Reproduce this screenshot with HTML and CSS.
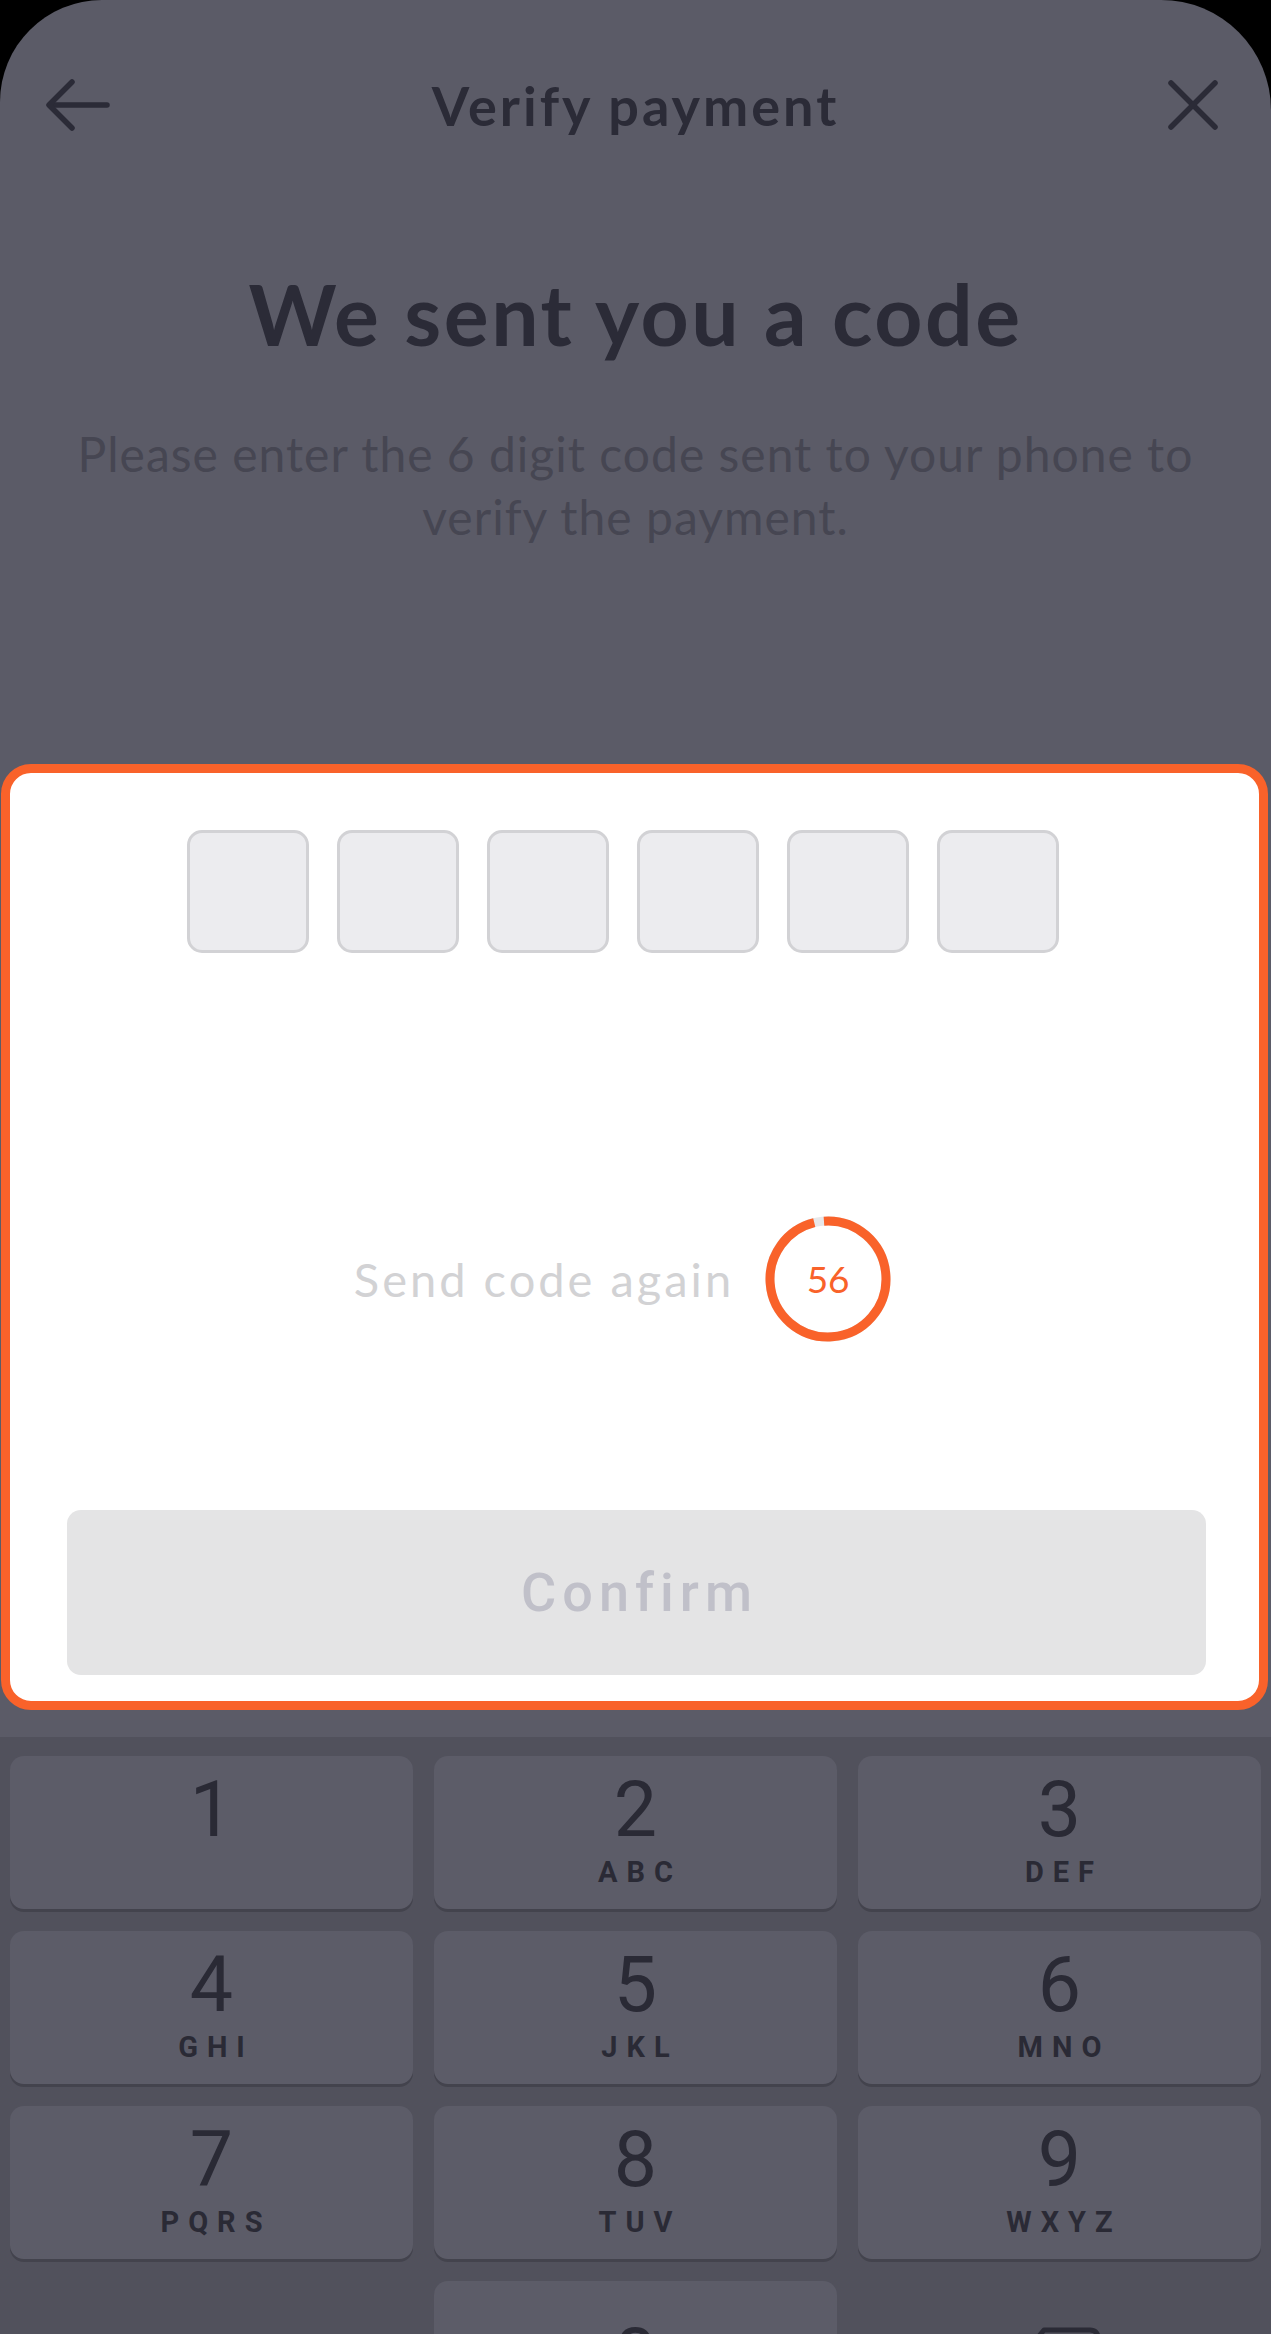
FILE: index.html
```html
<!DOCTYPE html>
<html lang="en">
<head>
  <meta charset="UTF-8">
  <meta name="viewport" content="width=device-width, initial-scale=1.0">
  <title>Verify payment</title>
  <link rel="stylesheet" href="styles.css">
</head>
<body>
  <div class="screen">
    <!-- Top bar -->
    <header class="topbar">
      <button class="icon-btn" aria-label="Back">
        <svg width="64" height="64" viewBox="0 0 64 64" fill="none" stroke="currentColor" stroke-width="5.5" stroke-linecap="round" stroke-linejoin="round">
          <path d="M4 32H61"/>
          <path d="M26 9L3 32L26 55"/>
        </svg>
      </button>
      <h1 class="topbar-title">Verify payment</h1>
      <button class="icon-btn" aria-label="Close">
        <svg width="64" height="64" viewBox="0 0 64 64" fill="none" stroke="currentColor" stroke-width="5.5" stroke-linecap="round">
          <path d="M10 10L54 54"/>
          <path d="M54 10L10 54"/>
        </svg>
      </button>
    </header>

    <!-- Intro text -->
    <section class="intro">
      <h2>We sent you a code</h2>
      <p>Please enter the 6 digit code sent to your phone to verify the payment.</p>
    </section>

    <!-- Code entry -->
    <div class="code-card">
      <div class="otp">
        <span class="otp-box"></span>
        <span class="otp-box"></span>
        <span class="otp-box"></span>
        <span class="otp-box"></span>
        <span class="otp-box"></span>
        <span class="otp-box"></span>
      </div>

      <div class="resend">
        <span class="resend-label">Send code again</span>
        <div class="timer">
          <svg width="126" height="126" viewBox="0 0 126 126">
            <circle cx="63" cy="63" r="58" fill="none" stroke="#e8e8ea" stroke-width="9"/>
            <circle cx="63" cy="63" r="58" fill="none" stroke="#f9622a" stroke-width="9" stroke-dasharray="354 365" transform="rotate(-94 63 63)"/>
          </svg>
          <span class="timer-count">56</span>
        </div>
      </div>

      <button class="confirm" disabled>Confirm</button>
    </div>

    <div class="kb-gap"></div>

    <!-- Keypad -->
    <div class="keypad">
      <div class="key"><span class="digit">1</span><span class="letters"></span></div>
      <div class="key"><span class="digit">2</span><span class="letters">ABC</span></div>
      <div class="key"><span class="digit">3</span><span class="letters">DEF</span></div>
      <div class="key"><span class="digit">4</span><span class="letters">GHI</span></div>
      <div class="key"><span class="digit">5</span><span class="letters">JKL</span></div>
      <div class="key"><span class="digit">6</span><span class="letters">MNO</span></div>
      <div class="key"><span class="digit">7</span><span class="letters">PQRS</span></div>
      <div class="key"><span class="digit">8</span><span class="letters">TUV</span></div>
      <div class="key"><span class="digit">9</span><span class="letters">WXYZ</span></div>
      <div class="key key-blank"></div>
      <div class="key key-zero"><span class="digit">0</span></div>
      <div class="key key-blank key-delete">
        <svg width="84" height="62" viewBox="0 0 84 62" fill="none" stroke="#2a2a35" stroke-width="5" stroke-linejoin="round" stroke-linecap="round">
          <path d="M26 4H72C77 4 80 7 80 12V50C80 55 77 58 72 58H26L4 31Z"/>
          <path d="M40 20L60 42M60 20L40 42"/>
        </svg>
      </div>
    </div>
  </div>
</body>
</html>
```

FILE: styles.css
```css
/* General styles */
html, body {
  margin: 0;
  background-color: #000;
}

body {
  font-family: "Lato", "Noto Sans", sans-serif;
  color: #2b2b37;
}

button {
  border: none;
  background: none;
  padding: 0;
  margin: 0;
  font: inherit;
  color: inherit;
}

.screen {
  display: flex;
  flex-direction: column;
  height: 2334px;
  overflow: hidden;
  background-color: #5b5b67;
  border-radius: 102px 110px 0 0;
}

/* Top bar */
.topbar {
  display: flex;
  align-items: center;
  justify-content: space-between;
  height: 210px;
  flex-shrink: 0;
  padding: 0 46px;
}

.icon-btn {
  width: 64px;
  height: 64px;
  display: flex;
  color: #2b2b37;
}

.topbar-title {
  margin: 0;
  font-size: 54px;
  font-weight: 700;
  letter-spacing: 3px;
  color: #2b2b37;
}

/* Intro */
.intro {
  text-align: center;
  padding: 0 30px;
}

.intro h2 {
  margin: 54px 0 0;
  font-size: 84px;
  line-height: 1.2;
  font-weight: 700;
  letter-spacing: 2.5px;
  color: #2b2b37;
}

.intro p {
  margin: 57px 0 0;
  font-size: 48px;
  line-height: 63px;
  letter-spacing: 1px;
  color: #464652;
}

/* Code card */
.code-card {
  margin: 216px 3px 0 1px;
  padding: 57px 53px 26px 57px;
  background-color: #fff;
  border: 9px solid #f9622a;
  border-radius: 30px;
}

.otp {
  display: flex;
  justify-content: center;
  gap: 28px;
  padding-right: 28px;
}

.otp-box {
  width: 122px;
  height: 123px;
  box-sizing: border-box;
  background-color: #ececef;
  border: 3px solid #d2d2d5;
  border-radius: 15px;
}

.resend {
  display: flex;
  align-items: center;
  justify-content: center;
  gap: 31px;
  margin-top: 263px;
  padding-right: 28px;
}

.resend-label {
  font-size: 47px;
  letter-spacing: 3px;
  color: #d2d2d4;
}

.timer {
  position: relative;
  width: 126px;
  height: 126px;
}

.timer svg {
  display: block;
}

.timer-count {
  position: absolute;
  inset: 0;
  display: flex;
  align-items: center;
  justify-content: center;
  font-size: 37px;
  color: #f9622a;
}

.confirm {
  display: block;
  width: 100%;
  height: 165px;
  margin-top: 168px;
  background-color: #e4e4e5;
  border-radius: 14px;
  font-family: "Roboto", "Liberation Sans", sans-serif;
  font-size: 54px;
  font-weight: 500;
  letter-spacing: 6px;
  padding-left: 6px;
  color: #c0c0c9;
}

/* Keypad */
.kb-gap {
  height: 27px;
  flex-shrink: 0;
}

.keypad {
  flex: 1;
  display: grid;
  grid-template-columns: repeat(3, 1fr);
  grid-auto-rows: 153px;
  align-content: start;
  gap: 22px 21px;
  padding: 19px 10px;
  background-color: #51515c;
}

.key {
  display: flex;
  flex-direction: column;
  align-items: center;
  background-color: #5c5c68;
  border-radius: 14px;
  box-shadow: 0 3px 0 #43434d;
  font-family: "Roboto", "Liberation Sans", sans-serif;
  color: #2a2a35;
}

.digit {
  margin-top: 16px;
  font-size: 77px;
  line-height: 1;
}

.letters {
  margin-top: 9px;
  font-size: 29px;
  line-height: 1;
  font-weight: 700;
  letter-spacing: 9px;
  padding-left: 9px;
}

.key-blank {
  background: none;
  box-shadow: none;
}

.key-zero {
  justify-content: center;
}

.key-zero .digit {
  margin-top: 0;
}

.key-delete {
  justify-content: center;
}
```
